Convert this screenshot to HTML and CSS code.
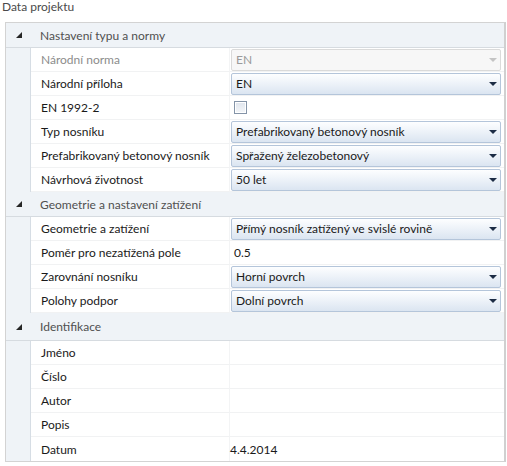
FILE: index.html
```html
<!DOCTYPE html>
<html lang="cs">
<head>
<meta charset="utf-8">
<title>Data projektu</title>
<link rel="stylesheet" href="styles.css">
</head>
<body>
<div class="title">Data projektu</div>
<div class="panel">
  <div class="cat first">
    <div class="cat-toggle"><span class="tri"></span></div>
    <div class="cat-name">Nastavení typu a normy</div>
  </div>
  <div class="row">
    <div class="indent"></div>
    <div class="label disabled">Národní norma</div>
    <div class="value"><div class="combo combo-disabled"><span>EN</span><span class="arrow"></span></div></div>
  </div>
  <div class="row">
    <div class="indent"></div>
    <div class="label">Národní příloha</div>
    <div class="value"><div class="combo"><span>EN</span><span class="arrow"></span></div></div>
  </div>
  <div class="row">
    <div class="indent"></div>
    <div class="label">EN 1992-2</div>
    <div class="value"><span class="check"></span></div>
  </div>
  <div class="row">
    <div class="indent"></div>
    <div class="label">Typ nosníku</div>
    <div class="value"><div class="combo"><span>Prefabrikovaný betonový nosník</span><span class="arrow"></span></div></div>
  </div>
  <div class="row">
    <div class="indent"></div>
    <div class="label">Prefabrikovaný betonový nosník</div>
    <div class="value"><div class="combo"><span>Spřažený železobetonový</span><span class="arrow"></span></div></div>
  </div>
  <div class="row">
    <div class="indent"></div>
    <div class="label">Návrhová životnost</div>
    <div class="value"><div class="combo"><span>50 let</span><span class="arrow"></span></div></div>
  </div>

  <div class="cat">
    <div class="cat-toggle"><span class="tri"></span></div>
    <div class="cat-name">Geometrie a nastavení zatížení</div>
  </div>
  <div class="row">
    <div class="indent"></div>
    <div class="label">Geometrie a zatížení</div>
    <div class="value"><div class="combo"><span>Přímý nosník zatížený ve svislé rovině</span><span class="arrow"></span></div></div>
  </div>
  <div class="row">
    <div class="indent"></div>
    <div class="label">Poměr pro nezatížená pole</div>
    <div class="value"><span class="text-val">0.5</span></div>
  </div>
  <div class="row">
    <div class="indent"></div>
    <div class="label">Zarovnání nosníku</div>
    <div class="value"><div class="combo"><span>Horní povrch</span><span class="arrow"></span></div></div>
  </div>
  <div class="row">
    <div class="indent"></div>
    <div class="label">Polohy podpor</div>
    <div class="value"><div class="combo"><span>Dolní povrch</span><span class="arrow"></span></div></div>
  </div>

  <div class="cat tall">
    <div class="cat-toggle"><span class="tri"></span></div>
    <div class="cat-name">Identifikace</div>
  </div>
  <div class="row">
    <div class="indent"></div>
    <div class="label">Jméno</div>
    <div class="value"></div>
  </div>
  <div class="row">
    <div class="indent"></div>
    <div class="label">Číslo</div>
    <div class="value"></div>
  </div>
  <div class="row">
    <div class="indent"></div>
    <div class="label">Autor</div>
    <div class="value"></div>
  </div>
  <div class="row">
    <div class="indent"></div>
    <div class="label">Popis</div>
    <div class="value"></div>
  </div>
  <div class="row last">
    <div class="indent"></div>
    <div class="label">Datum</div>
    <div class="value"><span class="date-val">4.4.2014</span></div>
  </div>
</div>
</body>
</html>
```
FILE: styles.css
```css
html, body {
  margin: 0;
  padding: 0;
  background: #ffffff;
}
body {
  font-family: Lato, "Open Sans", "Liberation Sans", sans-serif;
  font-size: 12px;
  color: #1a1a1a;
}
.title {
  height: 22px;
  line-height: 14px;
  padding-left: 2px;
  color: #4a4a4a;
  box-sizing: border-box;
}
.panel {
  margin-left: 5px;
  border: 1px solid #d3d3d3;
  border-right: 2px solid #d0d0d0;
  box-sizing: border-box;
  width: 501px;
}
.cat {
  display: flex;
  height: 25px;
  box-sizing: border-box;
  background: #eff3f7;
  border-bottom: 1px solid #d6dbe0;
}
.cat.tall {
  height: 28px;
}
.cat-toggle {
  width: 25px;
  display: flex;
  align-items: center;
  justify-content: center;
}
.tri {
  width: 0;
  height: 0;
  border-left: 6px solid transparent;
  border-bottom: 6px solid #262626;
  margin-left: 0;
}
.cat-name {
  display: flex;
  align-items: center;
  padding-left: 9px;
  color: #505050;
}
.row {
  display: grid;
  grid-template-columns: 25px 199px 1fr;
  height: 24px;
}
.indent {
  background: #eff3f7;
  border-right: 1px solid #d6dde4;
}
.label {
  display: flex;
  align-items: center;
  padding-left: 10px;
  border-bottom: 1px solid #f1f2f3;
  border-right: 1px solid #f3f4f5;
}
.label.disabled {
  color: #8c8c8c;
}
.value {
  display: flex;
  align-items: center;
  padding: 0 3px 0 1px;
  border-bottom: 1px solid #f1f2f3;
}
.row.last .label,
.row.last .value {
  border-bottom: none;
}
.combo {
  flex: 1;
  height: 22px;
  box-sizing: border-box;
  display: flex;
  align-items: center;
  justify-content: space-between;
  padding: 0 3px 0 4px;
  border: 1px solid #b4c5da;
  border-radius: 2px;
  background: linear-gradient(#fdfeff 0%, #eef3f9 45%, #dbe5f1 100%);
  color: #1a1a1a;
}
.combo-disabled {
  border-color: #dadada;
  background: #f7f7f7;
  color: #9a9a9a;
}
.arrow {
  width: 0;
  height: 0;
  border-left: 4px solid transparent;
  border-right: 4px solid transparent;
  border-top: 4px solid #1c2c45;
}
.combo-disabled .arrow {
  border-top-color: #c4c4c4;
}
.check {
  width: 13px;
  height: 13px;
  box-sizing: border-box;
  margin-left: 3px;
  border: 1px solid #8494a8;
  background: linear-gradient(#dfe5ed, #f4f6f9);
  box-shadow: inset 0 0 0 1px #ffffff;
}
.text-val {
  padding-left: 3px;
}
.date-val {
  margin-left: -1px;
}
```
